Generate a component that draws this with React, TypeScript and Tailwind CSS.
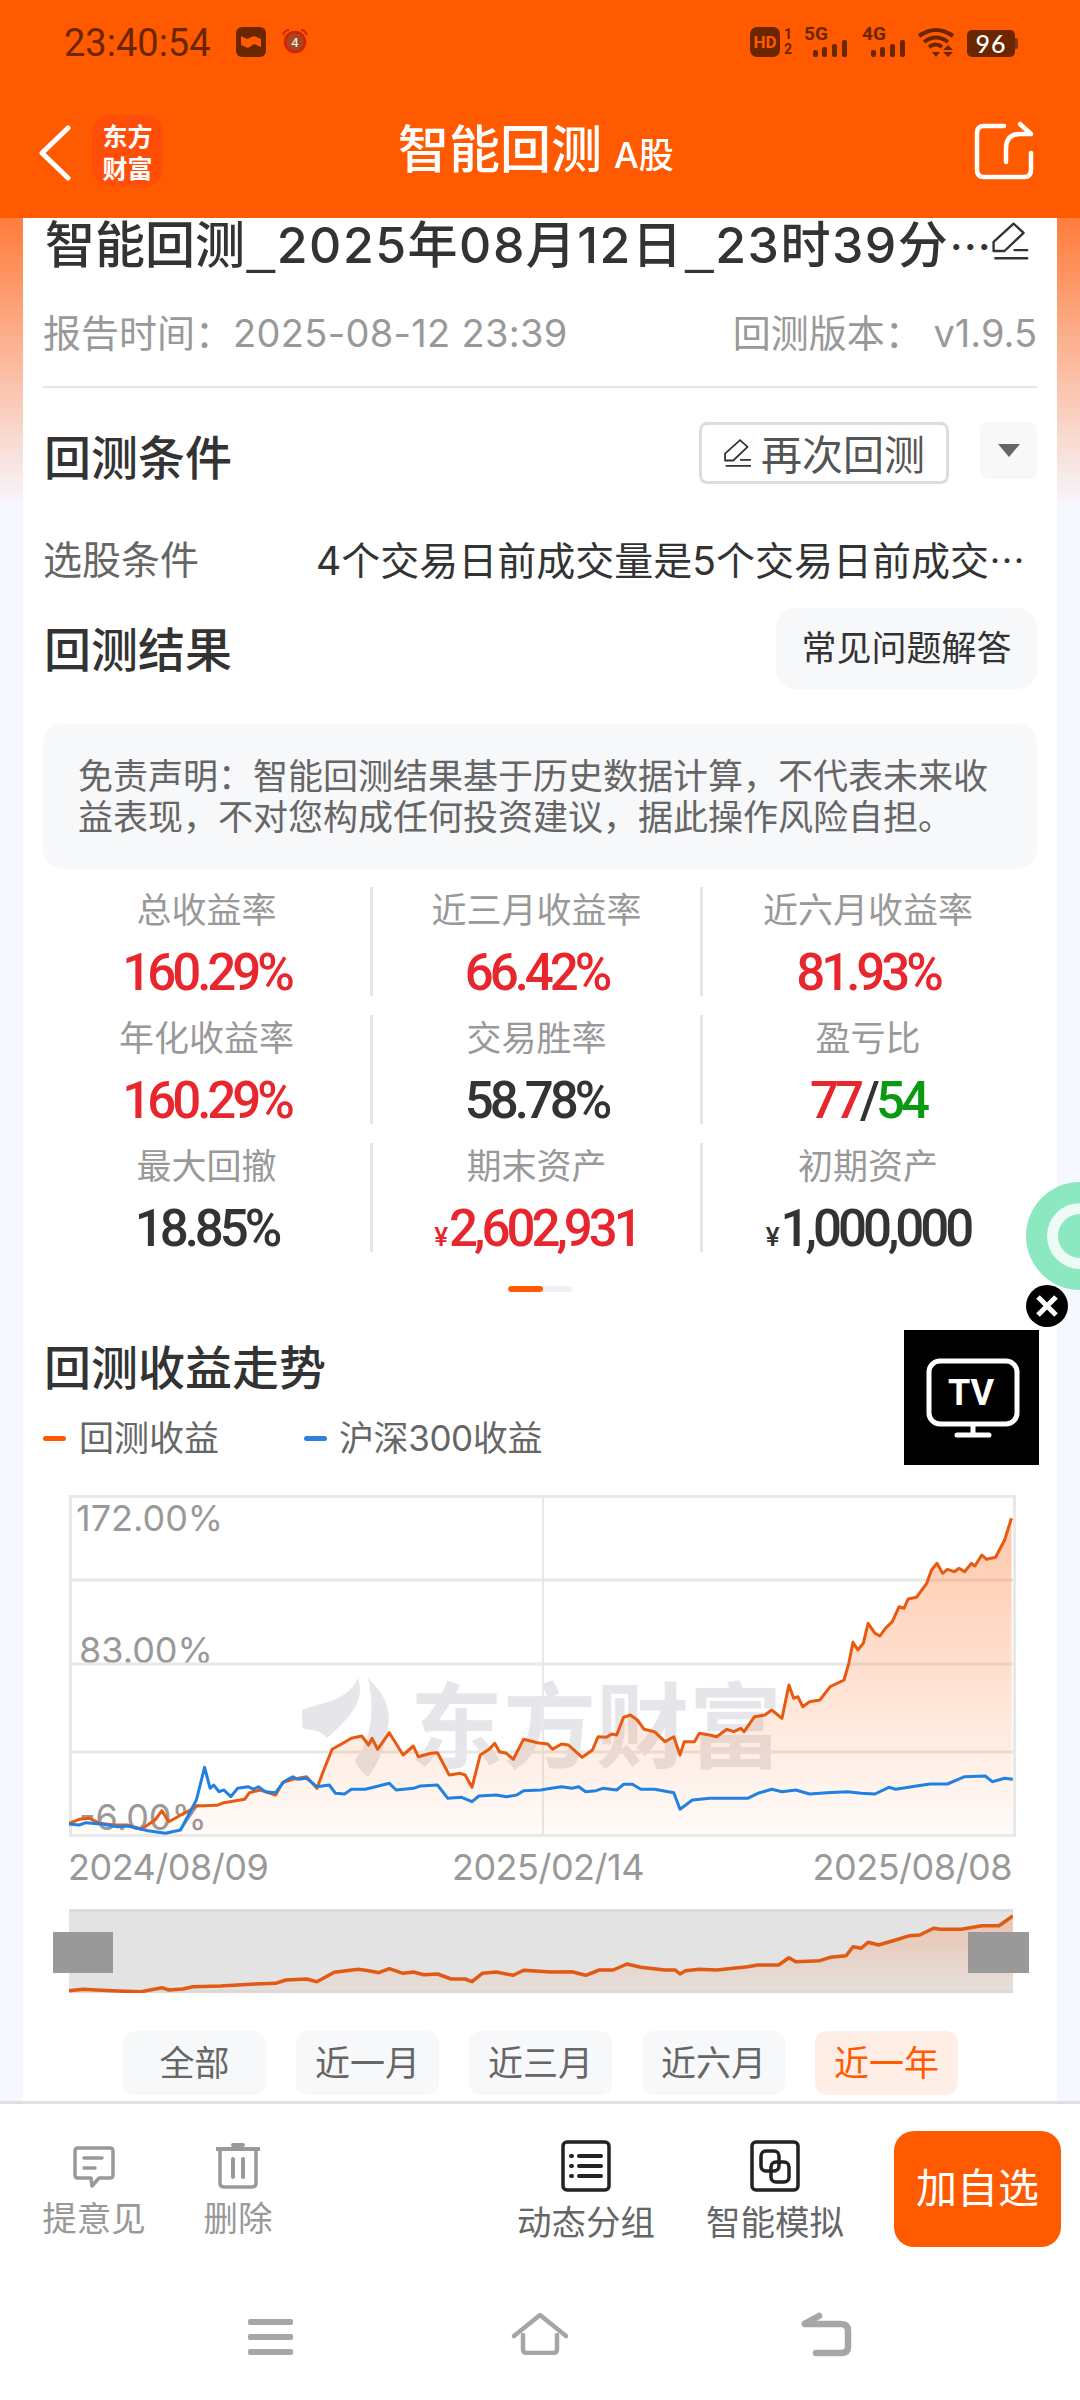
import React from 'react';

// points read off the reference, x in zoomed px (0-1568), y in zoomed px (3x)
const orangePts = [[100,1030],[115,1018],[130,1015],[145,1030],[165,1035],[185,1035],[205,1048],[225,1020],[235,992],[245,1025],[260,1008],[272,995],[285,978],[315,976],[325,968],[355,958],[362,938],[378,930],[400,945],[410,908],[425,898],[445,890],[460,925],[470,870],[482,808],[495,793],[510,775],[525,768],[535,795],[540,775],[548,808],[565,758],[585,825],[600,798],[607,830],[625,820],[635,818],[652,885],[668,880],[675,885],[685,922],[697,825],[710,808],[718,790],[725,815],[735,820],[745,838],[760,778],[780,788],[795,792],[802,808],[815,792],[825,795],[845,832],[860,810],[868,770],[880,772],[888,762],[895,765],[905,712],[915,705],[925,720],[935,748],[950,755],[965,785],[978,770],[987,825],[993,785],[1008,785],[1015,760],[1030,765],[1040,770],[1055,748],[1065,755],[1075,745],[1080,755],[1095,710],[1110,705],[1120,690],[1135,715],[1145,615],[1152,655],[1158,650],[1165,680],[1175,665],[1190,660],[1205,620],[1225,600],[1232,550],[1238,487],[1245,510],[1253,490],[1260,430],[1270,460],[1277,468],[1285,445],[1295,425],[1305,380],[1312,385],[1318,357],[1330,352],[1345,310],[1352,270],[1360,250],[1368,280],[1375,268],[1385,275],[1392,265],[1400,275],[1410,250],[1415,258],[1425,225],[1432,238],[1445,232],[1458,180],[1468,115]];
const bluePts = [[100,1032],[115,1035],[125,1028],[150,1033],[170,1040],[185,1038],[200,1045],[215,1052],[240,1060],[262,1050],[285,960],[297,862],[305,925],[310,915],[318,935],[325,930],[335,950],[345,925],[360,920],[368,928],[375,920],[385,935],[400,938],[412,905],[425,890],[432,898],[445,895],[460,920],[478,915],[487,940],[500,942],[510,928],[530,928],[545,920],[565,910],[575,930],[600,925],[610,918],[635,915],[650,955],[670,952],[685,965],[695,948],[720,945],[735,950],[750,945],[760,932],[785,930],[800,925],[815,920],[830,925],[840,920],[850,935],[865,932],[875,925],[895,930],[905,913],[918,913],[930,928],[950,928],[978,938],[987,988],[1005,960],[1030,955],[1085,955],[1100,940],[1120,928],[1135,935],[1155,930],[1175,942],[1200,938],[1230,935],[1250,940],[1270,942],[1290,922],[1300,928],[1330,918],[1350,912],[1375,912],[1400,890],[1430,888],[1440,905],[1458,895],[1470,898]];
const miniPts = [[100,1532],[120,1528],[140,1530],[170,1533],[205,1535],[235,1523],[245,1530],[265,1527],[280,1520],[320,1518],[370,1512],[400,1510],[415,1500],[445,1497],[460,1505],[485,1477],[520,1468],[535,1472],[550,1478],[565,1466],[585,1480],[600,1476],[615,1484],[635,1482],[655,1497],[675,1497],[685,1505],[700,1480],[720,1476],[745,1486],[760,1471],[800,1476],[830,1475],[850,1486],[870,1470],[890,1470],[910,1452],[930,1462],[965,1470],[980,1470],[987,1482],[995,1472],[1015,1468],[1040,1470],[1085,1460],[1100,1455],[1130,1455],[1145,1433],[1155,1445],[1190,1442],[1205,1432],[1228,1427],[1238,1400],[1250,1405],[1260,1387],[1275,1395],[1300,1380],[1320,1367],[1335,1365],[1355,1345],[1365,1348],[1395,1348],[1425,1337],[1450,1337],[1470,1308]];

const toLine = (pts: number[][], yOff: number) =>
  pts.map(([x, y]) => `${(x * 0.689 - 69).toFixed(1)},${(y / 3 - yOff).toFixed(1)}`).join(' ');

const stats = [
  { label: '总收益率', value: '160.29%', color: 'text-[#e8262d]' },
  { label: '近三月收益率', value: '66.42%', color: 'text-[#e8262d]' },
  { label: '近六月收益率', value: '81.93%', color: 'text-[#e8262d]' },
  { label: '年化收益率', value: '160.29%', color: 'text-[#e8262d]' },
  { label: '交易胜率', value: '58.78%', color: 'text-[#333333]' },
  { label: '盈亏比', value: 'ratio', color: '' },
  { label: '最大回撤', value: '18.85%', color: 'text-[#333333]' },
  { label: '期末资产', value: '2,602,931', color: 'text-[#e8262d]', yen: true },
  { label: '初期资产', value: '1,000,000', color: 'text-[#333333]', yen: true },
];

function PenIcon({ size, className }: { size: number; className?: string }) {
  return (
    <svg width={size} height={size} viewBox="30 10 42 44" fill="none" stroke="#333" strokeWidth="2.6" strokeLinejoin="round" strokeLinecap="round" className={className}>
      <path d="M32 43 V33 L54 13 L65 23 L44 43 Z" />
      <path d="M34 51 H69 M55 42 H69" />
    </svg>
  );
}

function StatusBar() {
  return (
    <div className="flex h-[88px] items-start pt-[27px] text-[#6b2600]">
      <span className="ml-[64px] w-[150px] text-[38px] leading-[32px] font-[Roboto,sans-serif]">23:40:54</span>
      <div className="ml-[22px] flex h-[30px] w-[30px] items-center justify-center rounded-[6px] bg-[#6b2600]">
        <svg width="22" height="14" viewBox="0 0 22 14"><path d="M1 1 L7 4 L14 1 L21 4 V12 L14 9 L8 13 L1 10 Z" fill="#ff5a00" /></svg>
      </div>
      <svg width="30" height="30" viewBox="0 0 30 30" className="ml-[14px]">
        <circle cx="15" cy="15" r="10" fill="#a5481d" stroke="#d4200f" strokeWidth="2.5" />
        <path d="M3 8 Q5 3 9 3 M27 8 Q25 3 21 3" stroke="#d4200f" strokeWidth="2" fill="none" />
        <text x="15" y="20" textAnchor="middle" fontSize="13" fill="#fff" fontFamily="Roboto">4</text>
      </svg>
      <div className="ml-[440px] flex h-[30px] w-[30px] items-center justify-center rounded-[7px] bg-[#6b2600] text-[17px] leading-none font-bold text-[#ff5a00] font-[Roboto,sans-serif]">HD</div>
      <div className="ml-[3px] flex w-[10px] flex-col items-center text-[14px] leading-[15px] font-bold font-[Roboto,sans-serif]"><span>1</span><span>2</span></div>
      <Signal label="5G" className="ml-[11px]" />
      <Signal label="4G" className="ml-[14px]" />
      <svg width="40" height="32" viewBox="0 0 40 32" className="ml-[11px]" fill="none" stroke="#6b2600" strokeWidth="4">
        <path d="M2 9 Q19 -3 36 9" />
        <path d="M7 15 Q19 6 31 15" />
        <path d="M12 20 Q19 15 25 20" />
        <path d="M15 25 H23 L19 30 Z" fill="#6b2600" stroke="none" />
        <path d="M31 18 L36 23 H26 Z M26 25 H36 L31 30 Z" fill="#6b2600" stroke="none" />
      </svg>
      <div className="mt-[3px] ml-[10px] flex h-[27px] w-[48px] items-center justify-center rounded-[5px] bg-[#6b2600] text-[25px] leading-none font-medium tracking-[1px] text-white font-[Lato,sans-serif]">96</div>
      <div className="mt-[11px] h-[11px] w-[3px] rounded-r-[2px] bg-[#7c3a12]"></div>
    </div>
  );
}

function Signal({ label, className }: { label: string; className?: string }) {
  return (
    <div className={`relative h-[30px] w-[44px] ${className}`}>
      <span className="absolute top-[-3px] left-0 text-[19px] leading-[20px] font-bold font-[Roboto,sans-serif]">{label}</span>
      <svg width="36" height="17" viewBox="0 0 36 17" className="absolute top-[13px] left-[9px]" fill="#6b2600">
        <rect x="0" y="10" width="5" height="7" rx="2" />
        <rect x="9" y="7" width="5" height="10" rx="2" />
        <rect x="19" y="4" width="5" height="13" rx="2" />
        <rect x="29" y="0" width="5" height="17" rx="2" />
      </svg>
    </div>
  );
}

function NavBar() {
  return (
    <div className="flex h-[130px] items-start text-white">
      <svg width="32" height="56" viewBox="0 0 32 56" className="mt-[37px] ml-[39px]" fill="none" stroke="#fff" strokeWidth="5" strokeLinecap="round" strokeLinejoin="round">
        <path d="M29 3 L3 28 L29 53" />
      </svg>
      <div className="mt-[27px] ml-[21px] flex h-[71px] w-[71px] flex-col items-center justify-center rounded-[18px] bg-[#ff4d0a] text-[25px] leading-[32px] font-bold font-['Noto_Sans_CJK_SC',sans-serif]">
        <span>东方</span>
        <span>财富</span>
      </div>
      <div className="mt-[32px] ml-[235px] flex w-[280px] items-baseline">
        <span className="text-[51px] leading-[60px] font-medium">智能回测</span>
        <span className="ml-[12px] text-[35px] leading-[60px] font-medium">A股</span>
      </div>
      <svg width="60" height="60" viewBox="0 0 60 60" className="mt-[33px] ml-[296px]" fill="none" stroke="#fff" strokeWidth="4.5" strokeLinecap="round" strokeLinejoin="round">
        <path d="M30 5 H10 Q3 5 3 12 V49 Q3 56 10 56 H50 Q57 56 57 49 V32" />
        <path d="M32 41 V28 Q32 13 46 13 H57 L46 3" />
      </svg>
    </div>
  );
}

function StatValue({ s }: { s: (typeof stats)[number] }) {
  if (s.value === 'ratio') {
    return (
      <span className="text-[#333333]">
        <span className="text-[#e8262d]">77</span>/<span className="text-[#0a9a12]">54</span>
      </span>
    );
  }
  return (
    <span className={s.color}>
      {s.yen && <span className="mr-[5px] text-[26px]">¥</span>}
      {s.value}
    </span>
  );
}

function StatsGrid() {
  return (
    <div className="mt-[18px] grid w-[990px] grid-cols-3 gap-y-[19px]">
      {stats.map((s, i) => (
        <div key={s.label} className={`flex h-[109px] flex-col items-center ${i % 3 !== 2 ? 'border-r-[3px] border-[#e6e6e6]' : ''}`}>
          <span className="mt-[3px] text-[35px] leading-[40px] text-[#999999]">{s.label}</span>
          <span className="mt-[20px] text-[51px] leading-[46px] font-medium tracking-[-4px] font-[Roboto,sans-serif]">
            <StatValue s={s} />
          </span>
        </div>
      ))}
    </div>
  );
}

function Chart() {
  const line = toLine(orangePts, 15);
  const grid = [85, 169, 257];
  return (
    <div className="relative mt-[37px] ml-[26px] h-[342px] w-[947px] border-[3px] border-[#e8e8e8]">
      <span className="absolute top-[0px] left-[4px] text-[36px] leading-[40px] text-[#999999]">172.00%</span>
      <span className="absolute top-[132px] left-[7px] text-[36px] leading-[40px] text-[#999999]">83.00%</span>
      <span className="absolute top-[299px] left-[7px] text-[36px] leading-[40px] text-[#999999]">-6.00%</span>
      <div className="absolute top-[179px] left-[230px] flex items-center">
        <svg width="100" height="100" viewBox="0 0 100 100" fill="#e6e6ea">
          <path d="M0 33 C20 25 45 25 56 1 C62 20 55 35 25 61 C15 50 5 55 0 50 Z" />
          <path d="M66 1 C80 15 90 30 86 50 C84 70 74 90 66 100 C60 95 55 90 53 83 C65 70 75 40 66 1 Z" />
        </svg>
        <span className="ml-[8px] text-[93px] leading-[100px] font-bold text-[#e6e6ea]">东方财富</span>
      </div>
      <svg width="947" height="342" viewBox="0 0 947 342" className="absolute top-[-3px] left-[-3px]">
        <defs>
          <linearGradient id="area" x1="0" y1="0" x2="0" y2="1">
            <stop offset="0" stopColor="#ff7a33" stopOpacity="0.42" />
            <stop offset="1" stopColor="#ff7a33" stopOpacity="0.03" />
          </linearGradient>
        </defs>
        {grid.map((y) => (
          <line key={y} x1="0" x2="947" y1={y} y2={y} stroke="#e8e8e8" strokeWidth="3" />
        ))}
        <line x1="474" x2="474" y1="0" y2="342" stroke="#e8e8e8" strokeWidth="2" />
        <polygon points={`${line} 943,339 0,339`} fill="url(#area)" />
        <polyline points={line} fill="none" stroke="#e85a10" strokeWidth="3" strokeLinejoin="round" />
        <polyline points={toLine(bluePts, 15)} fill="none" stroke="#2081e2" strokeWidth="3" strokeLinejoin="round" />
      </svg>
    </div>
  );
}

function MiniMap() {
  const line = toLine(miniPts, 429);
  return (
    <div className="relative mt-[22px] ml-[26px] h-[84px] w-[944px] border-t-[3px] border-b-[3px] border-[#dcdcdc] bg-[#e3e3e3]">
      <svg width="944" height="84" viewBox="0 0 944 84" className="absolute top-[-3px] left-0">
        <defs>
          <linearGradient id="mini" x1="0" y1="0" x2="0" y2="1">
            <stop offset="0" stopColor="#ff7a33" stopOpacity="0.3" />
            <stop offset="1" stopColor="#ff7a33" stopOpacity="0.03" />
          </linearGradient>
        </defs>
        <polygon points={`${line} 944,84 0,84`} fill="url(#mini)" />
        <polyline points={line} fill="none" stroke="#e05a14" strokeWidth="3.5" strokeLinejoin="round" />
      </svg>
      <div className="absolute top-[20px] left-[-16px] h-[41px] w-[60px] bg-[#999999]"></div>
      <div className="absolute top-[20px] right-[-16px] h-[41px] w-[61px] bg-[#999999]"></div>
    </div>
  );
}

function Underscore() {
  return <span className="mx-[2px] font-['Liberation_Sans',sans-serif]">_</span>;
}

function Card() {
  return (
    <div className="h-[1883px] w-[1034px] bg-white pl-[20px]">
      <div className="flex h-[54px] w-[994px] items-center">
        <span className="pl-[2px] text-[50px] leading-[54px] font-medium whitespace-nowrap text-[#333333]">
          智能回测<Underscore />
          <span className="tracking-[1.5px]">2025年08月12日</span>
          <Underscore />
          <span className="tracking-[1.5px]">23时39分</span>
          <span className="font-['Noto_Sans_CJK_SC',sans-serif] text-[42px]">⋯</span>
        </span>
        <PenIcon size={40} className="mt-[-8px] ml-auto mr-[6px]" />
      </div>
      <div className="mt-[39px] flex h-[44px] w-[994px] items-center justify-between text-[38px] leading-[44px] text-[#999999]">
        <span>报告时间：<span className="tracking-[0.3px]">2025-08-12 23:39</span></span>
        <span>回测版本：&nbsp;v1.9.5</span>
      </div>
      <div className="mt-[31px] h-[2px] w-[994px] bg-[#e5e5e5]"></div>

      <div className="mt-[34px] flex h-[62px] w-[994px] items-start">
        <span className="mt-[8px] ml-[1px] text-[47px] leading-[56px] font-medium text-[#333333]">回测条件</span>
        <div className="ml-auto flex h-[62px] w-[250px] items-center justify-center rounded-[8px] border-[3px] border-[#dddddd] text-[41px] text-[#555555]">
          <PenIcon size={30} />
          <span className="mt-[5px] ml-[8px]">再次回测</span>
        </div>
        <div className="ml-[31px] flex h-[57px] w-[57px] items-center justify-center rounded-[8px] bg-[#f7f8fa]">
          <svg width="22" height="13" viewBox="0 0 22 13"><path d="M0 0 H22 L11 13 Z" fill="#666" /></svg>
        </div>
      </div>

      <div className="mt-[54px] flex h-[44px] w-[994px] items-center leading-[44px]">
        <span className="w-[273px] shrink-0 text-[39px] text-[#666666]">选股条件</span>
        <span className="text-[39px] whitespace-nowrap text-[#333333]">4个交易日前成交量是5个交易日前成交<span className="font-['Noto_Sans_CJK_SC',sans-serif] text-[36px]">⋯</span></span>
      </div>

      <div className="mt-[26px] flex h-[81px] w-[994px] items-center justify-between">
        <span className="mt-[2px] ml-[1px] text-[47px] leading-[56px] font-medium text-[#333333]">回测结果</span>
        <div className="flex h-[81px] w-[261px] items-center justify-center rounded-[20px] bg-[#f7f8fa] text-[35px] text-[#333333]">常见问题解答</div>
      </div>

      <div className="mt-[35px] h-[145px] w-[994px] rounded-[20px] bg-[#f7f8fa] pt-[32px] pl-[35px] text-[35px] leading-[41px] text-[#666666]">
        免责声明：智能回测结果基于历史数据计算，不代表未来收<br />益表现，不对您构成任何投资建议，据此操作风险自担。
      </div>

      <StatsGrid />

      <div className="mt-[34px] ml-[465px] flex h-[6px] w-[64px] overflow-hidden rounded-full bg-[#eef0f5]">
        <div className="h-full w-[35px] rounded-full bg-[#ff5a00]"></div>
      </div>

      <div className="mt-[48px] ml-[1px] h-[56px] text-[47px] leading-[56px] font-medium text-[#333333]">回测收益走势</div>

      <div className="mt-[22px] flex h-[40px] items-center text-[35px] leading-[40px] text-[#666666]">
        <span className="h-[5px] w-[23px] rounded-full bg-[#ff5a00]"></span>
        <span className="ml-[13px]">回测收益</span>
        <span className="ml-[85px] h-[5px] w-[23px] rounded-full bg-[#2f80d8]"></span>
        <span className="ml-[12px] tracking-[-0.4px]">沪深300收益</span>
      </div>

      <Chart />

      <div className="mt-[10px] ml-[25px] flex h-[40px] w-[944px] items-center justify-between text-[36px] leading-[40px] tracking-[-0.5px] text-[#999999]">
        <span>2024/08/09</span>
        <span className="ml-[15px]">2025/02/14</span>
        <span>2025/08/08</span>
      </div>

      <MiniMap />

      <div className="mt-[38px] ml-[80px] flex gap-[30px] text-[35px]">
        {['全部', '近一月', '近三月', '近六月'].map((t) => (
          <div key={t} className="flex h-[64px] w-[143px] items-center justify-center rounded-[12px] bg-[#f7f8fa] text-[#666666]">{t}</div>
        ))}
        <div className="flex h-[64px] w-[143px] items-center justify-center rounded-[12px] bg-[#ffeee6] text-[#ff5a00]">近一年</div>
      </div>
    </div>
  );
}

function Footer() {
  return (
    <div className="h-[299px] border-t-[3px] border-[#e0e0e0] bg-white">
      <div className="flex h-[208px] items-start pl-[34px]">
        <div className="mt-[41px] flex w-[120px] flex-col items-center text-[#999999]">
          <svg width="44" height="44" viewBox="0 0 44 44" fill="none" stroke="#999" strokeWidth="3.5" strokeLinejoin="round" strokeLinecap="round">
            <path d="M6 3 H38 Q41 3 41 6 V30 Q41 33 38 33 H27 L20 41 L19 33 H6 Q3 33 3 30 V6 Q3 3 6 3 Z" />
            <path d="M12 13 H30 M12 23 H23" />
          </svg>
          <span className="mt-[10px] text-[34.5px] leading-[40px]">提意见</span>
        </div>
        <div className="mt-[39px] ml-[24px] flex w-[120px] flex-col items-center text-[#999999]">
          <svg width="44" height="46" viewBox="0 0 44 46" fill="none" stroke="#999" strokeWidth="3.5" strokeLinejoin="round" strokeLinecap="round">
            <path d="M1 6 H43 M17 2 H27" strokeWidth="4" />
            <path d="M4 8 V40 Q4 44 8 44 H36 Q40 44 40 40 V8" />
            <path d="M17 16 V34 M27 16 V34" strokeWidth="4" />
          </svg>
          <span className="mt-[10px] text-[34.5px] leading-[40px]">删除</span>
        </div>
        <div className="mt-[36px] ml-[208px] flex w-[160px] flex-col items-center text-[#666666]">
          <svg width="50" height="52" viewBox="0 0 50 52" fill="none" stroke="#222" strokeWidth="3.5" strokeLinejoin="round" strokeLinecap="round">
            <rect x="2" y="2" width="46" height="48" rx="4" />
            <path d="M18 16 H40 M18 26 H40 M18 36 H40 M10 16 H11 M10 26 H11 M10 36 H11" strokeWidth="4" />
          </svg>
          <span className="mt-[11px] text-[34.5px] leading-[40px]">动态分组</span>
        </div>
        <div className="mt-[36px] ml-[29px] flex w-[160px] flex-col items-center text-[#666666]">
          <svg width="50" height="52" viewBox="0 0 50 52" fill="none" stroke="#222" strokeWidth="3.5" strokeLinejoin="round">
            <rect x="2" y="2" width="46" height="48" rx="4" />
            <rect x="11" y="11" width="18" height="20" rx="5" />
            <rect x="21" y="22" width="18" height="20" rx="5" />
          </svg>
          <span className="mt-[11px] text-[34.5px] leading-[40px]">智能模拟</span>
        </div>
        <div className="mt-[27px] ml-[39px] flex h-[116px] w-[167px] items-center justify-center rounded-[20px] bg-[#ff5a00] text-[41px] text-white">加自选</div>
      </div>
      <div className="flex h-[43px] items-end pl-[248px]">
        <svg width="46" height="36" viewBox="0 0 46 36" fill="#a6a6a6">
          <rect x="0" y="0" width="45" height="6" rx="2" />
          <rect x="0" y="15" width="45" height="6" rx="2" />
          <rect x="0" y="30" width="45" height="6" rx="2" />
        </svg>
        <svg width="58" height="43" viewBox="0 0 58 43" className="ml-[217px]" fill="none" stroke="#a6a6a6" strokeWidth="4.5" strokeLinecap="round" strokeLinejoin="round">
          <path d="M3 24 L29 3 L55 24" />
          <path d="M12 23 V37 Q12 41 16 41 H42 Q46 41 46 37 V23" />
        </svg>
        <svg width="52" height="46" viewBox="18 11 52 46" className="ml-[232px] mb-[-3px]" fill="none" stroke="#a6a6a6" strokeWidth="6.5" strokeLinecap="round" strokeLinejoin="round">
          <path d="M22 23 H58 Q65 23 65 30 V46 Q65 52 58 52 H33" />
          <path d="M22 22.5 L36 15" />
        </svg>
      </div>
    </div>
  );
}

export default function App() {
  return (
    <div className="relative flex h-[2400px] w-[1080px] flex-col overflow-hidden bg-white font-[Inter,'Noto_Sans_CJK_SC',sans-serif]">
      <div className="relative z-10 h-[218px] shrink-0 bg-[#ff5a00]">
        <StatusBar />
        <NavBar />
      </div>
      <div className="h-[1883px] shrink-0 bg-[linear-gradient(#ff7c3c_0px,#f6f8ff_290px)] pl-[23px]">
        <Card />
      </div>
      <Footer />

      {/* floating video + ad bubbles */}
      <div className="absolute top-[1182px] left-[1026px] flex h-[108px] w-[108px] items-center justify-center rounded-full bg-[#8ce8c0]">
        <div className="flex h-[66px] w-[66px] items-center justify-center rounded-full bg-[#ecfbf4]">
          <div className="h-[44px] w-[44px] rounded-full bg-[#8ce8c0]"></div>
        </div>
      </div>
      <div className="absolute top-[1285px] left-[1026px] flex h-[42px] w-[42px] items-center justify-center rounded-full bg-black">
        <svg width="22" height="22" viewBox="0 0 22 22" stroke="#fff" strokeWidth="5"><path d="M2 2 L20 20 M20 2 L2 20" /></svg>
      </div>
      <div className="absolute top-[1330px] left-[904px] h-[135px] w-[135px] bg-black">
        <svg width="135" height="135" viewBox="0 0 135 135" fill="none" stroke="#fff" strokeWidth="5" strokeLinecap="round">
          <rect x="25" y="31" width="88" height="63" rx="11" />
          <path d="M69 95 V105 M53 105 H85" strokeWidth="5" />
        </svg>
        <span className="absolute top-[43px] left-[44px] text-[36px] leading-[40px] font-bold text-white font-[Roboto,sans-serif]">TV</span>
      </div>
    </div>
  );
}
